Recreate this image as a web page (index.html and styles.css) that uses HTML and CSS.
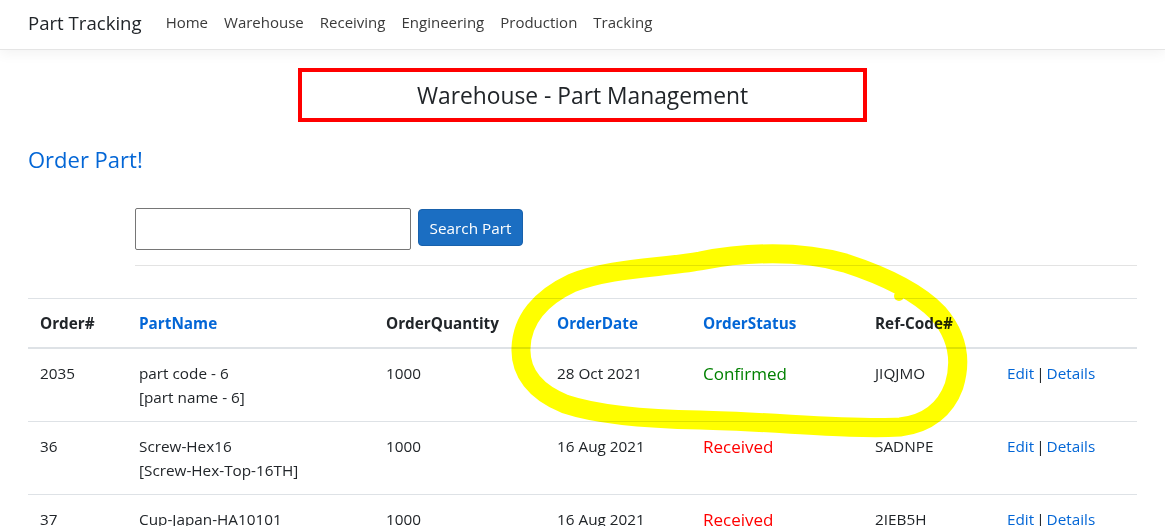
FILE: index.html
```html
<!DOCTYPE html>
<html lang="en">
<head>
<meta charset="utf-8">
<title>Part Tracking</title>
<link rel="stylesheet" href="styles.css">
</head>
<body>
<header class="navbar">
  <a class="brand" href="#">Part Tracking</a>
  <nav class="nav">
    <a class="nav-link" href="#">Home</a>
    <a class="nav-link" href="#">Warehouse</a>
    <a class="nav-link" href="#">Receiving</a>
    <a class="nav-link" href="#">Engineering</a>
    <a class="nav-link" href="#">Production</a>
    <a class="nav-link" href="#">Tracking</a>
  </nav>
</header>
<main class="content">
  <h3 class="page-title">Warehouse - Part Management</h3>
  <a class="order-link" href="#">Order Part!</a>
  <div class="search-area">
    <form class="search-row">
      <input class="search-input" type="text">
      <button class="btn-primary" type="button">Search Part</button>
    </form>
    <hr class="divider">
  </div>
  <table class="table">
    <colgroup>
      <col class="c1"><col class="c2"><col class="c3"><col class="c4"><col class="c5"><col class="c6"><col class="c7">
    </colgroup>
    <thead>
      <tr>
        <th>Order#</th>
        <th><a href="#">PartName</a></th>
        <th>OrderQuantity</th>
        <th><a href="#">OrderDate</a></th>
        <th><a href="#">OrderStatus</a></th>
        <th>Ref-Code#</th>
        <th></th>
      </tr>
    </thead>
    <tbody>
      <tr>
        <td>2035</td>
        <td>part code - 6<br>[part name - 6]</td>
        <td>1000</td>
        <td>28 Oct 2021</td>
        <td><span class="status confirmed">Confirmed</span></td>
        <td>JIQJMO</td>
        <td class="actions"><a href="#">Edit</a> | <a href="#">Details</a></td>
      </tr>
      <tr>
        <td>36</td>
        <td>Screw-Hex16<br>[Screw-Hex-Top-16TH]</td>
        <td>1000</td>
        <td>16 Aug 2021</td>
        <td><span class="status received">Received</span></td>
        <td>SADNPE</td>
        <td class="actions"><a href="#">Edit</a> | <a href="#">Details</a></td>
      </tr>
      <tr>
        <td>37</td>
        <td>Cup-Japan-HA10101<br>[Cup-Japan-HA10101]</td>
        <td>1000</td>
        <td>16 Aug 2021</td>
        <td><span class="status received">Received</span></td>
        <td>2IEB5H</td>
        <td class="actions"><a href="#">Edit</a> | <a href="#">Details</a></td>
      </tr>
    </tbody>
  </table>
</main>
<svg class="annotation" width="1165" height="526" viewBox="0 0 1165 526" aria-hidden="true">
  <path d="M 700 261 C 745 252, 800 250, 845 263 C 885 276, 918 292, 938 313 C 957 335, 962 360, 954 386 C 946 408, 928 424, 900 427 C 850 430, 780 422, 700 420 C 640 419, 595 414, 565 404 C 535 392, 520 372, 521 348 C 522 320, 540 298, 572 283 C 610 268, 660 268, 700 261 Z" fill="none" stroke="#ffff00" stroke-width="19" stroke-linejoin="round"/>
  <circle cx="899" cy="296" r="5" fill="#ffff00"/>
</svg>
</body>
</html>
```

FILE: styles.css
```css
html, body {
  margin: 0;
  padding: 0;
}
body {
  font-family: "Segoe UI", "Open Sans", "Noto Sans", sans-serif;
  font-size: 15.3px;
  line-height: 1.5;
  color: #212529;
  background: #fff;
  position: relative;
  overflow: hidden;
  height: 526px;
}
a {
  color: #0366d6;
  text-decoration: none;
}
.navbar {
  height: 49px;
  display: flex;
  align-items: center;
  padding: 0 28px;
  border-bottom: 1px solid #e5e5e5;
  box-shadow: 0 4px 12px rgba(0, 0, 0, 0.05);
  box-sizing: content-box;
}
.brand {
  font-size: 18.6px;
  color: #212529;
  margin-right: 16px;
  padding-bottom: 4px;
}
.nav {
  display: flex;
}
.nav-link {
  color: #3a3a3a;
  padding: 0 8px;
  font-size: 15px;
  padding-bottom: 4px;
}
.content {
  padding: 0 28px;
}
.page-title {
  box-sizing: border-box;
  width: 569px;
  height: 54px;
  margin: 18px auto 0;
  border: 4px solid #ff0000;
  font-size: 22.8px;
  font-weight: 400;
  text-align: center;
  line-height: 48px;
  color: #212529;
}
.order-link {
  display: inline-block;
  font-size: 22px;
  margin-top: 22px;
  line-height: 30px;
}
.search-area {
  padding-left: 107px;
  margin-top: 34px;
}
.search-row {
  display: flex;
  align-items: flex-start;
  gap: 7px;
  margin: 0;
}
.search-input {
  box-sizing: border-box;
  width: 276px;
  height: 42px;
  border: 1px solid #767676;
  border-radius: 2px;
  margin: 0;
}
.btn-primary {
  box-sizing: border-box;
  height: 37px;
  width: 105px;
  margin-top: 1px;
  background: #1b6ec2;
  border: 1px solid #1861ac;
  border-radius: 4px;
  color: #fff;
  font-family: inherit;
  font-size: 15.3px;
  padding: 0;
}
.divider {
  border: 0;
  border-top: 1px solid #e3e3e3;
  margin: 15px 0 0;
}
.table {
  width: 100%;
  table-layout: fixed;
  border-collapse: collapse;
  margin-top: 32px;
}
.c1 { width: 99px; }
.c2 { width: 247px; }
.c3 { width: 171px; }
.c4 { width: 146px; }
.c5 { width: 172px; }
.c6 { width: 132px; }
.c7 { width: auto; }
.table th,
.table td {
  text-align: left;
  vertical-align: top;
  padding: 12px 12px;
  line-height: 24px;
}
.table thead tr {
  border-top: 1px solid #dee2e6;
  border-bottom: 2px solid #dee2e6;
}
.table th {
  font-weight: 700;
  height: 24px;
}
.table tbody tr {
  border-bottom: 1px solid #dee2e6;
}
.table td {
  height: 47px;
}
.actions {
  word-spacing: -2px;
}
.status {
  font-size: 17px;
  line-height: 24px;
  display: inline-block;
  padding-top: 1px;
}
.confirmed { color: #008000; }
.received { color: #ff0000; }
.annotation {
  position: absolute;
  left: 0;
  top: 0;
  pointer-events: none;
  mix-blend-mode: multiply;
}
```
